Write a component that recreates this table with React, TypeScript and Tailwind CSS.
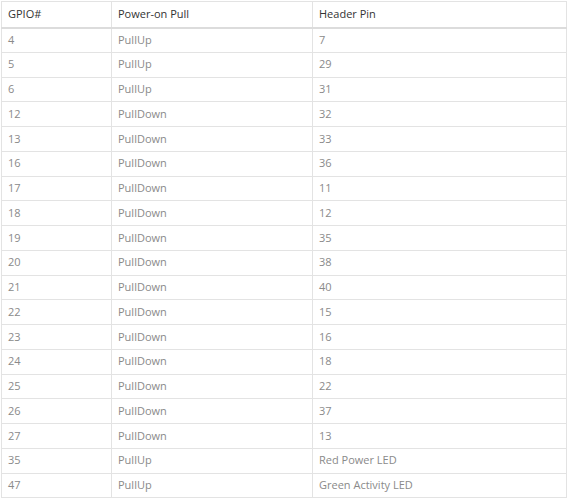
const rows: [string, string, string][] = [
  ["4", "PullUp", "7"],
  ["5", "PullUp", "29"],
  ["6", "PullUp", "31"],
  ["12", "PullDown", "32"],
  ["13", "PullDown", "33"],
  ["16", "PullDown", "36"],
  ["17", "PullDown", "11"],
  ["18", "PullDown", "12"],
  ["19", "PullDown", "35"],
  ["20", "PullDown", "38"],
  ["21", "PullDown", "40"],
  ["22", "PullDown", "15"],
  ["23", "PullDown", "16"],
  ["24", "PullDown", "18"],
  ["25", "PullDown", "22"],
  ["26", "PullDown", "37"],
  ["27", "PullDown", "13"],
  ["35", "PullUp", "Red Power LED"],
  ["47", "PullUp", "Green Activity LED"],
];

export default function App() {
  return (
    <div className="bg-white pl-px pt-px" style={{ fontFamily: '"Open Sans", "Noto Sans", sans-serif' }}>
      <table className="w-[566px] border-collapse border border-[#e3e3e3] text-[11px]">
        <thead>
          <tr className="h-[26px] border-b-2 border-[#dcdcdc] text-left text-[#333]">
            <th className="w-[110px] border-r border-[#e3e3e3] pl-[6px] font-normal">GPIO#</th>
            <th className="w-[201px] border-r border-[#e3e3e3] pl-[6px] font-normal">Power-on Pull</th>
            <th className="pl-[6px] font-normal">Header Pin</th>
          </tr>
        </thead>
        <tbody className="text-[#8a8a8a]">
          {rows.map(([gpio, pull, pin]) => (
            <tr key={gpio} className="h-[24.75px] border-b border-[#e3e3e3]">
              <td className="border-r border-[#e3e3e3] pl-[6px]">{gpio}</td>
              <td className="border-r border-[#e3e3e3] pl-[6px]">{pull}</td>
              <td className="pl-[6px]">{pin}</td>
            </tr>
          ))}
        </tbody>
      </table>
    </div>
  );
}
